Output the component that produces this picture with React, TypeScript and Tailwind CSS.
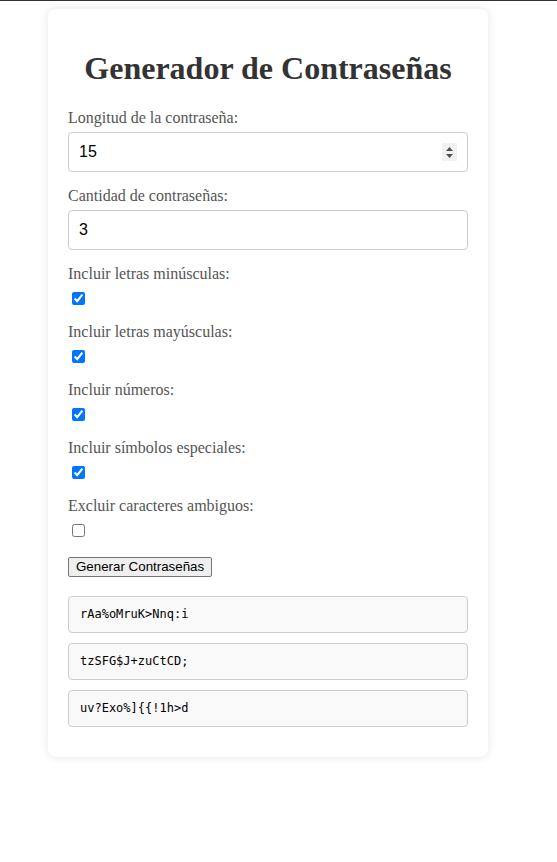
import { useState } from "react";

const OPTIONS = [
  { key: "lower", label: "Incluir letras minúsculas:", checked: true },
  { key: "upper", label: "Incluir letras mayúsculas:", checked: true },
  { key: "numbers", label: "Incluir números:", checked: true },
  { key: "symbols", label: "Incluir símbolos especiales:", checked: true },
  { key: "ambiguous", label: "Excluir caracteres ambiguos:", checked: false },
];

const PASSWORDS = ["rAa%oMruK>Nnq:i", "tzSFG$J+zuCtCD;", "uv?Exo%]{{!1h>d"];

function Label({ children }: { children: React.ReactNode }) {
  return (
    <label className="block h-[18px] leading-[18px] mb-[5px] text-[16px] text-[#555] font-['Liberation_Serif',serif]">
      {children}
    </label>
  );
}

export default function App() {
  const [length, setLength] = useState("15");
  const [count, setCount] = useState("3");

  return (
    <div className="min-h-screen bg-white border-t border-[#333] pt-[8px]">
      <div className="ml-[48px] w-[440px] rounded-[8px] bg-white px-[20px] pt-[20px] pb-[30px] shadow-[0_0_10px_rgba(0,0,0,0.1)]">
        <h1 className="mt-[21px] mb-[22px] text-center text-[32px] leading-[37px] font-bold text-[#333] font-['Liberation_Serif',serif]">
          Generador de Contraseñas
        </h1>

        <div className="mb-[15px]">
          <Label>Longitud de la contraseña:</Label>
          <div className="relative">
            <input
              type="text"
              inputMode="numeric"
              value={length}
              onChange={(e) => setLength(e.target.value)}
              className="block h-[40px] w-full rounded-[4px] border border-[#ccc] px-[10px] text-[16px] text-black font-['Liberation_Sans',Arial,sans-serif] outline-none"
            />
            <div className="absolute right-[11px] top-[11px] flex h-[18px] w-[15px] flex-col items-center justify-center gap-[3px] bg-[#f1f1f1]">
              <svg width="7" height="4" viewBox="0 0 7 4">
                <path d="M3.5 0 L7 4 L0 4 Z" fill="#505050" />
              </svg>
              <svg width="7" height="4" viewBox="0 0 7 4">
                <path d="M0 0 L7 0 L3.5 4 Z" fill="#505050" />
              </svg>
            </div>
          </div>
        </div>

        <div className="mb-[15px]">
          <Label>Cantidad de contraseñas:</Label>
          <input
            type="text"
            inputMode="numeric"
            value={count}
            onChange={(e) => setCount(e.target.value)}
            className="block h-[40px] w-full rounded-[4px] border border-[#ccc] px-[10px] text-[16px] text-black font-['Liberation_Sans',Arial,sans-serif] outline-none"
          />
        </div>

        {OPTIONS.map((opt) => (
          <div key={opt.key} className="mb-[15px]">
            <Label>{opt.label}</Label>
            <div className="flex h-[20px] items-start">
              <input type="checkbox" defaultChecked={opt.checked} className="ml-[4px] mt-[4px] h-[13px] w-[13px]" />
            </div>
          </div>
        ))}

        <div className="pt-[2px]">
          <button className="block h-[20px] rounded-[2px] border border-[#767676] bg-[#efefef] px-[7px] text-[13.33px] leading-[16px] text-black font-['Liberation_Sans',Arial,sans-serif]">
            Generar Contraseñas
          </button>
        </div>

        <div className="mt-[19px] flex flex-col gap-[10px]">
          {PASSWORDS.map((pw) => (
            <div
              key={pw}
              className="h-[37px] rounded-[4px] border border-[#ccc] bg-[#f9f9f9] px-[11px] py-[10px] text-[12px] leading-[15px] text-black font-['DejaVu_Sans_Mono',monospace]"
            >
              {pw}
            </div>
          ))}
        </div>
      </div>
    </div>
  );
}
